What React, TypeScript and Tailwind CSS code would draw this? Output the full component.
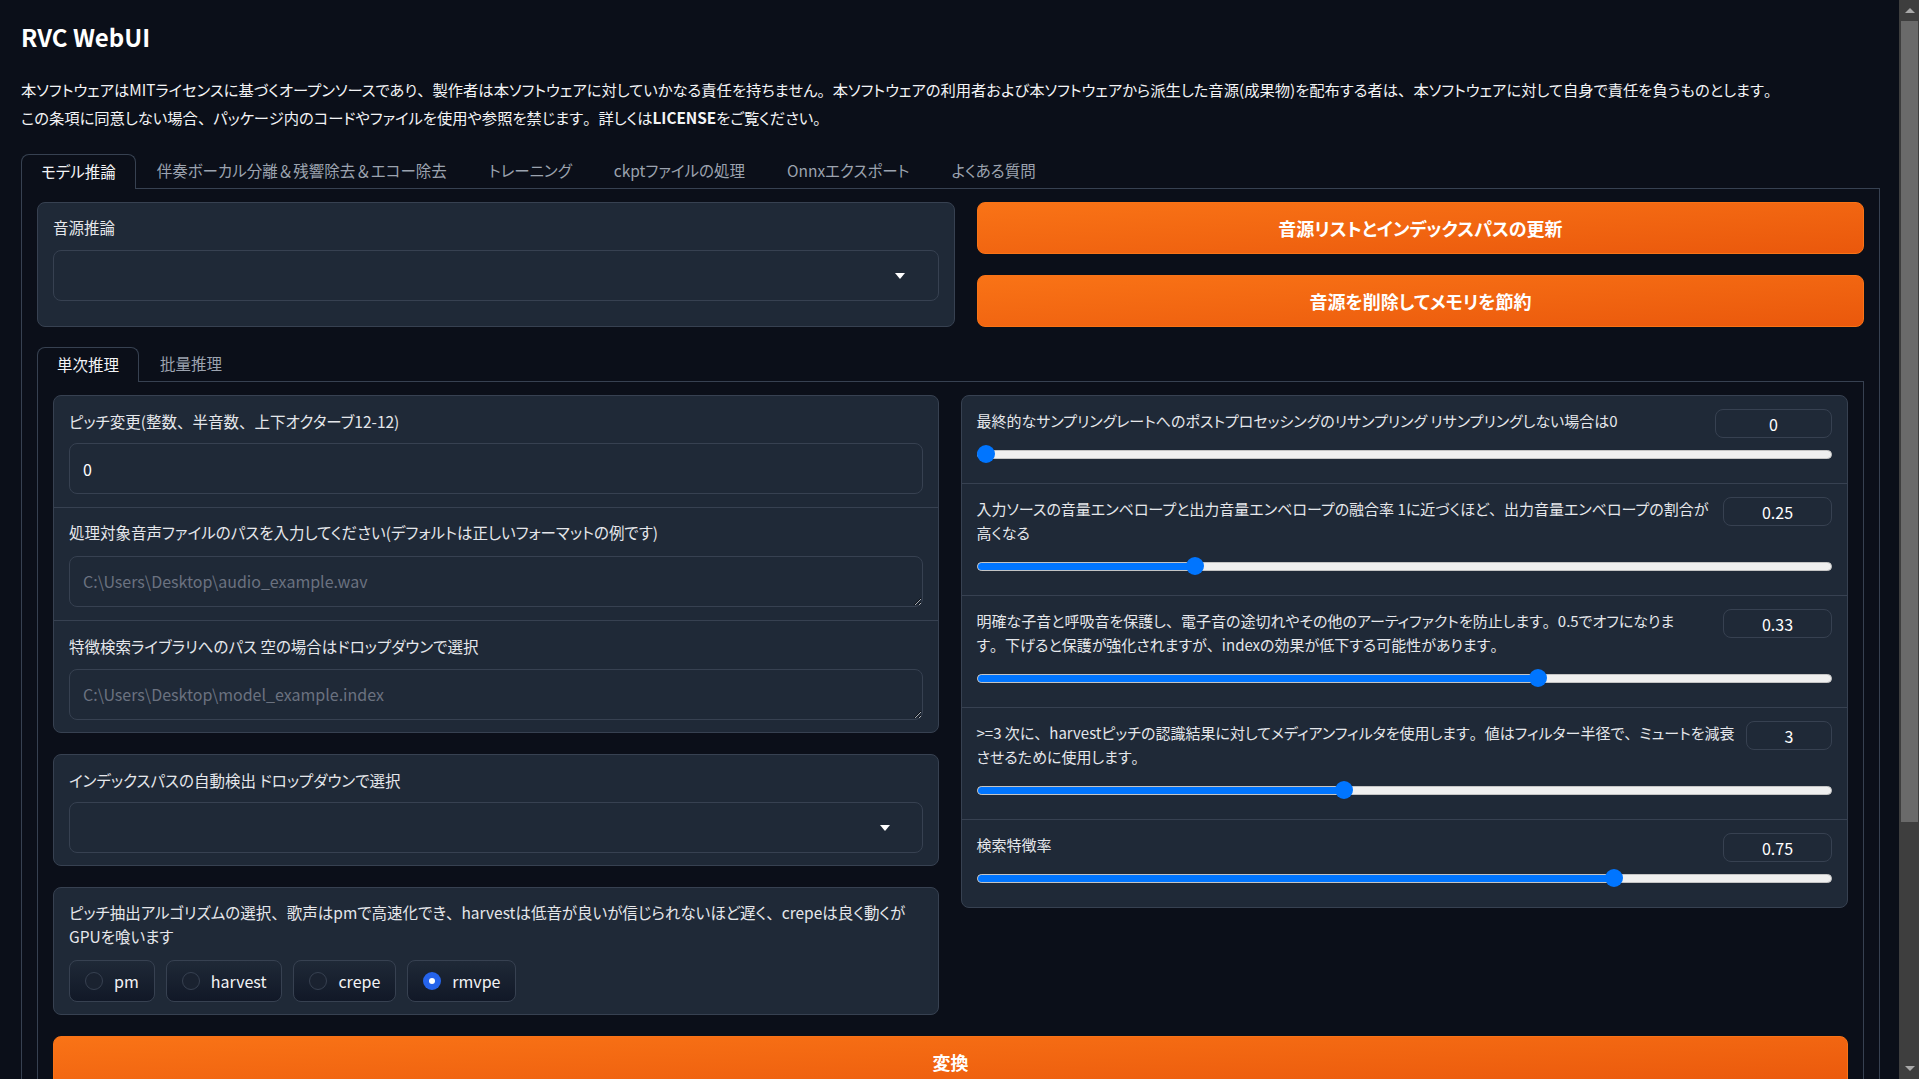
import { Fragment, ReactNode } from "react";

const tabs = [
  "モデル推論",
  "伴奏ボーカル分離＆残響除去＆エコー除去",
  "トレーニング",
  "ckptファイルの処理",
  "Onnxエクスポート",
  "よくある質問",
];

const sliders = [
  {
    lines: ["最終的なサンプリングレートへのポストプロセッシングのリサンプリング リサンプリングしない場合は0"],
    value: "0",
    pct: 0,
    box: "w-[117px]",
  },
  {
    lines: [
      "入力ソースの音量エンベロープと出力音量エンベロープの融合率 1に近づくほど、出力音量エンベロープの割合が",
      "高くなる",
    ],
    value: "0.25",
    pct: 0.25,
    box: "w-[109px]",
  },
  {
    lines: [
      "明確な子音と呼吸音を保護し、電子音の途切れやその他のアーティファクトを防止します。0.5でオフになりま",
      "す。下げると保護が強化されますが、indexの効果が低下する可能性があります。",
    ],
    value: "0.33",
    pct: 0.66,
    box: "w-[109px]",
  },
  {
    lines: [
      ">=3 次に、harvestピッチの認識結果に対してメディアンフィルタを使用します。値はフィルター半径で、ミュートを減衰",
      "させるために使用します。",
    ],
    value: "3",
    pct: 3 / 7,
    box: "w-[86px]",
  },
  {
    lines: ["検索特徴率"],
    value: "0.75",
    pct: 0.75,
    box: "w-[109px]",
  },
];

const radios = [
  { label: "pm", checked: false },
  { label: "harvest", checked: false },
  { label: "crepe", checked: false },
  { label: "rmvpe", checked: true },
];

// kana stay proportional (palt) but punctuation keeps its full width, like the original UI font
function J({ text }: { text: string }) {
  return (
    <>
      {text.split(/([、。＆])/).map((p, i) =>
        /^[、。＆]$/.test(p) ? (
          <span key={i} className="[font-feature-settings:normal]">
            {p}
          </span>
        ) : (
          p
        )
      )}
    </>
  );
}

function Caret() {
  return (
    <span className="w-0 h-0 border-l-[5px] border-r-[5px] border-t-[6px] border-l-transparent border-r-transparent border-t-white" />
  );
}

function Dropdown({ pad = "pr-[33px]" }: { pad?: string }) {
  return (
    <div className={`h-[51px] rounded-lg border border-[#374151] bg-[#1f2937] flex items-center justify-end ${pad}`}>
      <Caret />
    </div>
  );
}

function Label({ lines, size = "text-[15.5px]" }: { lines: string[]; size?: string }) {
  return (
    <div className={`${size} leading-6 text-[#e5e7eb]`}>
      {lines.map((l, i) => (
        <Fragment key={i}>
          {i > 0 && <br />}
          <J text={l} />
        </Fragment>
      ))}
    </div>
  );
}

function PathField({ placeholder }: { placeholder: string }) {
  return (
    <textarea
      placeholder={placeholder}
      className="block w-full h-[51px] resize-y rounded-lg border border-[#374151] bg-[#1f2937] px-[13px] py-[12px] text-[16px] leading-6 text-white placeholder:text-[#6b7280] outline-none [color-scheme:dark]"
    />
  );
}

function Slider({ pct }: { pct: number }) {
  return (
    <div className="relative mt-[7px] h-[18px] flex items-center">
      <div className="h-[9px] w-full rounded-full bg-[#efefef] border border-[#c4c4c4] overflow-hidden">
        <div
          className="h-full bg-[#0075ff]"
          style={{ width: `calc(${pct * 100}% - ${pct * 18}px + 9px)` }}
        />
      </div>
      <div
        className="absolute top-0 h-[18px] w-[18px] rounded-full bg-[#0075ff]"
        style={{ left: `calc(${pct * 100}% - ${pct * 18}px)` }}
      />
    </div>
  );
}

function TabBar({ items }: { items: string[] }) {
  return (
    <div className="flex items-end border-b border-[#374151] text-[15.5px]">
      {items.map((t, i) => (
        <div
          key={t}
          className={
            i === 0
              ? "h-[35px] -mb-px px-[19px] flex items-center rounded-t-lg border border-b-0 border-[#374151] bg-[#0b0f19] text-[#f3f4f6]"
              : "h-[34px] px-[21px] flex items-center text-[#9ca3af]"
          }
        >
          <J text={t} />
        </div>
      ))}
    </div>
  );
}

function OrangeButton({ children, className }: { children: ReactNode; className: string }) {
  return (
    <button
      className={`w-full rounded-lg border border-[#f97316] bg-gradient-to-br from-[#f97316] to-[#ea580c] text-white font-bold text-[18px] ${className}`}
    >
      {children}
    </button>
  );
}

export default function App() {
  return (
    <div className="h-[1079px] w-full overflow-hidden flex bg-[#0b0f19] font-['Noto_Sans_CJK_JP',sans-serif] [font-feature-settings:'palt']">
      <div className="flex-1 min-w-0 pl-[21px] pr-[19px] pt-[20px]">
        <h1 className="text-[24px] leading-[34px] font-bold text-white">RVC WebUI</h1>
        <p className="mt-[21px] text-[15.3px] leading-[28px] text-[#f3f4f6]">
          <J text="本ソフトウェアはMITライセンスに基づくオープンソースであり、製作者は本ソフトウェアに対していかなる責任を持ちません。本ソフトウェアの利用者および本ソフトウェアから派生した音源(成果物)を配布する者は、本ソフトウェアに対して自身で責任を負うものとします。" />
          <br />
          <J text="この条項に同意しない場合、パッケージ内のコードやファイルを使用や参照を禁じます。詳しくは" />
          <b>LICENSE</b>
          <J text="をご覧ください。" />
        </p>

        <div className="mt-[23px]">
          <TabBar items={tabs} />
          <div className="border border-t-0 border-[#374151] px-[15px] pt-[13px] pb-[20px]">
            {/* top row */}
            <div className="flex gap-[22px]">
              <div className="w-[918px] shrink-0 rounded-lg border border-[#374151] bg-[#1f2937] px-[15px] pt-[12px]">
                <Label lines={["音源推論"]} />
                <div className="mt-[11px]">
                  <Dropdown />
                </div>
              </div>
              <div className="flex-1 flex flex-col gap-[21px]">
                <OrangeButton className="h-[52px]">音源リストとインデックスパスの更新</OrangeButton>
                <OrangeButton className="h-[52px]">音源を削除してメモリを節約</OrangeButton>
              </div>
            </div>

            {/* inner tabs */}
            <div className="mt-[20px]">
              <TabBar items={["単次推理", "批量推理"]} />
              <div className="border border-t-0 border-[#374151] px-[15px] pt-[13px] pb-[20px]">
                <div className="flex gap-[22px] items-start">
                  {/* left column */}
                  <div className="flex-1 flex flex-col gap-[21px]">
                    <div className="rounded-lg border border-[#374151] bg-[#1f2937]">
                      <div className="px-[15px] pt-[13px] pb-[13px]">
                        <Label lines={["ピッチ変更(整数、半音数、上下オクターブ12-12)"]} />
                        <input
                          defaultValue="0"
                          className="mt-[10px] block w-full h-[51px] rounded-lg border border-[#374151] bg-[#1f2937] px-[13px] text-[16px] text-white outline-none"
                        />
                      </div>
                      <div className="border-t border-[#374151] px-[15px] pt-[12px] pb-[13px]">
                        <Label lines={["処理対象音声ファイルのパスを入力してください(デフォルトは正しいフォーマットの例です)"]} />
                        <div className="mt-[12px]">
                          <PathField placeholder="C:\Users\Desktop\audio_example.wav" />
                        </div>
                      </div>
                      <div className="border-t border-[#374151] px-[15px] pt-[13px] pb-[12px]">
                        <Label lines={["特徴検索ライブラリへのパス 空の場合はドロップダウンで選択"]} />
                        <div className="mt-[11px]">
                          <PathField placeholder="C:\Users\Desktop\model_example.index" />
                        </div>
                      </div>
                    </div>

                    <div className="rounded-lg border border-[#374151] bg-[#1f2937] px-[15px] pt-[13px] pb-[12px]">
                      <Label lines={["インデックスパスの自動検出 ドロップダウンで選択"]} />
                      <div className="mt-[10px]">
                        <Dropdown pad="pr-[32px]" />
                      </div>
                    </div>

                    <div className="rounded-lg border border-[#374151] bg-[#1f2937] px-[15px] pt-[12px] pb-[12px]">
                      <Label
                        lines={[
                          "ピッチ抽出アルゴリズムの選択、歌声はpmで高速化でき、harvestは低音が良いが信じられないほど遅く、crepeは良く動くが",
                          "GPUを喰います",
                        ]}
                      />
                      <div className="mt-[12px] flex gap-[11px]">
                        {radios.map((r) => (
                          <label
                            key={r.label}
                            className="h-[42px] flex items-center gap-[11px] pl-[15px] pr-[15px] rounded-lg border border-[#374151] bg-gradient-to-b from-[#1f2937] to-[#111827] text-[16px] text-[#f3f4f6]"
                          >
                            {r.checked ? (
                              <span className="h-[18px] w-[18px] rounded-full bg-[#2563eb] flex items-center justify-center">
                                <span className="h-[6px] w-[6px] rounded-full bg-white" />
                              </span>
                            ) : (
                              <span className="h-[18px] w-[18px] rounded-full border border-[#374151] bg-[#1a2230]" />
                            )}
                            {r.label}
                          </label>
                        ))}
                      </div>
                    </div>
                  </div>

                  {/* right column */}
                  <div className="flex-1 rounded-lg border border-[#374151] bg-[#1f2937]">
                    {sliders.map((s, i) => (
                      <div
                        key={i}
                        className={`pl-[15px] pr-[15px] pt-[13px] pb-[20px] ${i > 0 ? "border-t border-[#374151]" : ""}`}
                      >
                        <div className="flex items-start gap-[4px]">
                          <div className="flex-1 min-w-0 mb-[5px]">
                            <Label lines={s.lines} size="text-[15px]" />
                          </div>
                          <div
                            className={`${s.box} h-[29px] shrink-0 rounded-lg border border-[#374151] flex items-center justify-center text-[16px] text-white`}
                          >
                            {s.value}
                          </div>
                        </div>
                        <Slider pct={s.pct} />
                      </div>
                    ))}
                  </div>
                </div>

                <OrangeButton className="mt-[21px] h-[52px]">変換</OrangeButton>
              </div>
            </div>
          </div>
        </div>
      </div>

      {/* scrollbar */}
      <div className="w-[20px] shrink-0 bg-[#3e3e3e] flex flex-col items-center pl-[2px] pr-[1px]">
        <div className="h-[21px] flex items-center justify-center">
          <span className="w-0 h-0 border-l-[5px] border-r-[5px] border-b-[5px] border-l-transparent border-r-transparent border-b-[#a8a8a8]" />
        </div>
        <div className="w-full h-[801px] bg-[#6a6a6a]" />
        <div className="flex-1" />
        <div className="h-[21px] flex items-center justify-center">
          <span className="w-0 h-0 border-l-[5px] border-r-[5px] border-t-[5px] border-l-transparent border-r-transparent border-t-[#a8a8a8]" />
        </div>
      </div>
    </div>
  );
}
